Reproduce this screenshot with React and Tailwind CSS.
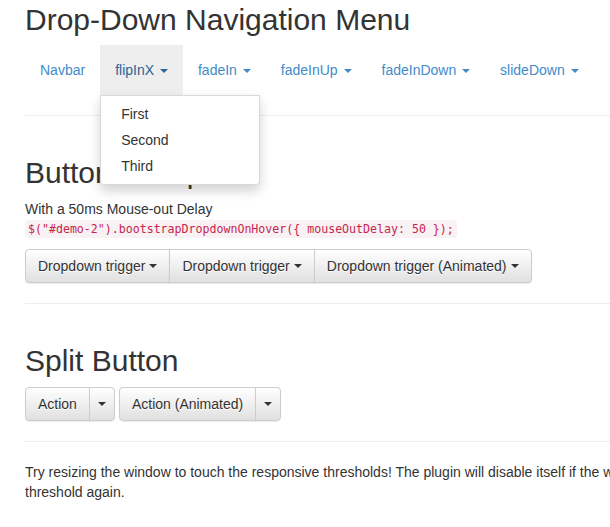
import React from 'react';

const font = { fontFamily: '"Liberation Sans", Arial, sans-serif' };

const Caret = ({ className = 'ml-[2px]' }) => (
  <span className={`${className} inline-block h-0 w-0 align-middle border-t-[4px] border-x-[4px] border-t-current border-x-transparent`}></span>
);

// bootstrap-theme style default button
const btnBase =
  'inline-flex items-center h-[34px] text-sm leading-5 text-[#333] border border-[#ccc] bg-gradient-to-b from-white to-[#e0e0e0] shadow-[0_1px_1px_rgba(0,0,0,0.075)] [text-shadow:0_1px_0_#fff]';
const btn = `${btnBase} px-3`;
const toggle = `${btnBase} px-2 -ml-px rounded-r-[4px]`;

const NavItem = ({ label, open }) => (
  <li className={`relative ${open ? 'bg-[#eee]' : ''}`}>
    <a className={`block px-[15px] py-[15px] text-sm leading-5 ${open ? 'text-[#2a6496]' : 'text-[#428bca]'}`}>
      {label} <Caret />
    </a>
    {open && (
      <ul className="absolute left-0 top-full z-10 w-[160px] py-[5px] bg-white border border-black/15 rounded-b-[4px] shadow-[0_6px_12px_rgba(0,0,0,0.175)]">
        {['First', 'Second', 'Third'].map(item => (
          <li key={item}>
            <a className="block px-5 py-[3px] text-sm leading-5 text-[#333]">{item}</a>
          </li>
        ))}
      </ul>
    )}
  </li>
);

const Trigger = ({ label, className = '' }) => (
  <button className={`${btn} gap-[2px] ${className}`}>
    <span>{label}</span>
    <Caret />
  </button>
);

export default function App() {
  return (
    <div className="w-full overflow-hidden bg-white text-[#333]" style={font}>
      <div className="w-[720px] pl-[25px] pt-[3px] pb-6">
        <h2 className="text-[30px] leading-[33px] font-normal mb-[9px]">Drop-Down Navigation Menu</h2>

        {/* Navbar */}
        <ul className="flex h-[50px] mb-5">
          <li>
            <a className="block px-[15px] py-[15px] text-sm leading-5 text-[#428bca]">Navbar</a>
          </li>
          <NavItem label="flipInX" open />
          <NavItem label="fadeIn" />
          <NavItem label="fadeInUp" />
          <NavItem label="fadeInDown" />
          <NavItem label="slideDown" />
        </ul>

        <hr className="border-t border-[#eee] mr-[-200px]" />

        {/* Button groups */}
        <h2 className="mt-10 mb-[10px] text-[30px] leading-[33px] font-normal">Button Groups</h2>
        <div className="text-sm leading-5 mb-[10px]">
          <div className="h-5">With a 50ms Mouse-out Delay</div>
          <div className="h-5 flex items-center">
            <code
              className="px-[3px] h-[18px] leading-[18px] rounded-[4px] bg-[#f9f2f4] text-[#c7254e] text-[11.6px]"
              style={{ fontFamily: '"DejaVu Sans Mono", "Liberation Mono", monospace' }}
            >
              $("#demo-2").bootstrapDropdownOnHover({'{'} mouseOutDelay: 50 {'}'});
            </code>
          </div>
        </div>
        <div className="flex">
          <Trigger label="Dropdown trigger" className="rounded-l-[4px]" />
          <Trigger label="Dropdown trigger" className="-ml-px" />
          <Trigger label="Dropdown trigger (Animated)" className="-ml-px rounded-r-[4px]" />
        </div>

        <hr className="mt-5 border-t border-[#eee] mr-[-200px]" />

        {/* Split buttons */}
        <h2 className="mt-10 mb-[10px] text-[30px] leading-[33px] font-normal">Split Button</h2>
        <div className="flex gap-1">
          <div className="flex">
            <button className={`${btn} rounded-l-[4px]`}>Action</button>
            <button className={toggle}>
              <Caret className="" />
            </button>
          </div>
          <div className="flex">
            <button className={`${btn} rounded-l-[4px]`}>Action (Animated)</button>
            <button className={toggle}>
              <Caret className="" />
            </button>
          </div>
        </div>

        <hr className="mt-5 border-t border-[#eee] mr-[-200px]" />

        <p className="mt-5 text-sm leading-5 whitespace-nowrap">
          Try resizing the window to touch the responsive thresholds! The plugin will disable itself if the window gets narrower than the
          <br />
          threshold again.
        </p>
      </div>
    </div>
  );
}
